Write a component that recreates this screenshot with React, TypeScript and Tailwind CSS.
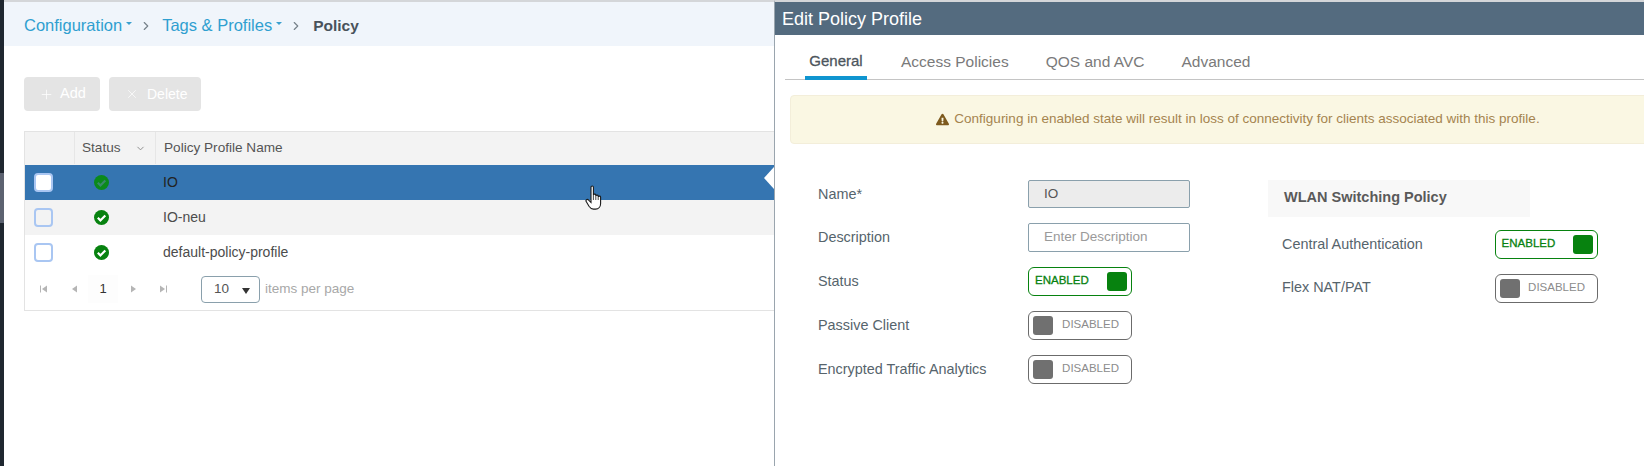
import { ChevronDown, ChevronRight, Plus, X } from "lucide-react";
import { FaExclamationTriangle } from "react-icons/fa";

const font = "font-['Liberation_Sans',Arial,sans-serif]";

const StatusIcon = ({ selected }: { selected?: boolean }) => (
  <svg width="15" height="15" viewBox="0 0 15 15">
    <circle cx="7.5" cy="7.5" r="7.5" fill={selected ? "#0b8a1c" : "#07820f"} />
    <path d="M3.8 7.8l2.6 2.6 4.9-5" fill="none" stroke={selected ? "#3a8a6a" : "#fff"} strokeWidth="2.2" />
  </svg>
);

const Row = ({ name, selected, striped }: { name: string; selected?: boolean; striped?: boolean }) => (
  <div className={`flex items-center h-[35px] ${selected ? "bg-[#3575b1]" : striped ? "bg-[#f3f3f3]" : "bg-white"}`}>
    <div className="w-[50px] pl-[9px]">
      <div className={`w-[19px] h-[19px] rounded-[4px] border-2 border-[#a9c6f2] ${selected ? "bg-white" : ""}`} />
    </div>
    <div className="w-[80px] flex justify-center pr-[28px]">
      <StatusIcon selected={selected} />
    </div>
    <span className={`pl-[8px] text-[14px] ${selected ? "text-[#222]" : "text-[#4c4c4c]"}`}>{name}</span>
  </div>
);

const PagerIcon = ({ dir, end }: { dir: "l" | "r"; end?: boolean }) => (
  <svg width="8" height="8" viewBox="0 0 8 8" fill="#b5b5b5">
    {dir === "l" ? <path d="M7 0.5v7L2 4z" /> : <path d="M1 0.5v7L6 4z" />}
    {end && (dir === "l" ? <rect x="0" y="0.5" width="1" height="7" /> : <rect x="7" y="0.5" width="1" height="7" />)}
  </svg>
);

const Toggle = ({ on }: { on?: boolean }) =>
  on ? (
    <div className="flex items-center justify-between w-[104px] h-[29px] rounded-[6px] border border-[#07820f] pl-[6px] pr-[4px]">
      <span className="text-[11.5px] text-[#07820f] [-webkit-text-stroke:0.3px_#07820f]">ENABLED</span>
      <div className="w-[20px] h-[19px] rounded-[3px] bg-[#07820f]" />
    </div>
  ) : (
    <div className="flex items-center justify-between w-[104px] h-[29px] rounded-[6px] border border-[#6b6b6b] pl-[4px] pr-[12px]">
      <div className="w-[20px] h-[19px] rounded-[3px] bg-[#707070]" />
      <span className="text-[11.5px] text-[#8c8c8c]">DISABLED</span>
    </div>
  );

const FormRow = ({ label, className, children }: { label: string; className?: string; children: React.ReactNode }) => (
  <div className={`flex items-center h-[44px] ${className ?? ""}`}>
    <span className="w-[210px] pt-[2px] text-[14.4px] text-[#56646c]">{label}</span>
    {children}
  </div>
);

const Caret = () => <span className="ml-[4px] mb-[4px] inline-block border-x-[3px] border-t-[3px] border-x-transparent border-t-[#3aa0cf]" />;

export default function App() {
  return (
    <div className={`relative flex w-[1644px] h-[466px] overflow-hidden bg-white ${font}`}>
      <div className="w-[4px] flex flex-col shrink-0">
        <div className="h-[173px] bg-[#1f2730]" />
        <div className="h-[50px] bg-[#5c6270]" />
        <div className="flex-1 bg-[#1f2730]" />
      </div>

      {/* left list */}
      <div className="w-[770px] shrink-0 border-t-2 border-[#d4d6d9]">
        <div className="flex items-center h-[44px] pl-[20px] pt-[3px] bg-[#f0f5fb] text-[16.5px]">
          <span className="text-[#2f9fd0]">Configuration</span>
          <Caret />
          <ChevronRight size={14} className="ml-[7px] mr-[9px] text-[#77828a]" />
          <span className="text-[#2f9fd0]">Tags &amp; Profiles</span>
          <Caret />
          <ChevronRight size={14} className="ml-[7px] mr-[10px] text-[#77828a]" />
          <span className="font-bold text-[15.5px] text-[#49525a]">Policy</span>
        </div>

        <div className="flex gap-[9px] pl-[20px] mt-[31px]">
          <div className="flex items-center w-[76px] h-[34px] pl-[15px] gap-[6px] rounded-[4px] bg-[#e4e4e4] text-[14.5px] text-white">
            <Plus size={15} strokeWidth={1.2} />
            Add
          </div>
          <div className="flex items-center w-[92px] h-[34px] pl-[16px] gap-[8px] rounded-[4px] bg-[#e4e4e4] text-[14px] text-white">
            <X size={14} strokeWidth={1.2} />
            Delete
          </div>
        </div>

        <div className="ml-[20px] mt-[20px] border-l border-t border-b border-[#e3e3e3] h-[180px]">
          <div className="flex items-center h-[33px] pb-px bg-[#f3f3f3] text-[13.6px] text-[#555]">
            <div className="w-[50px] h-full border-r border-[#e6e6e6]" />
            <div className="flex items-center justify-between w-[81px] h-full pl-[7px] pr-[9px] border-r border-[#e6e6e6]">
              Status
              <ChevronDown size={11} className="text-[#888]" />
            </div>
            <span className="pl-[8px]">Policy Profile Name</span>
          </div>
          <Row name="IO" selected />
          <Row name="IO-neu" striped />
          <Row name="default-policy-profile" />
          <div className="flex items-center h-[40px] pb-[2px]">
            <div className="flex items-center pl-[15px] w-[176px]">
              <PagerIcon dir="l" end />
              <span className="ml-[22px]"><PagerIcon dir="l" /></span>
              <span className="w-[30px] ml-[10px] h-[28px] flex items-center justify-center text-[13px] text-[#333] bg-[#fdfdfd]">1</span>
              <span className="ml-[12px]"><PagerIcon dir="r" /></span>
              <span className="ml-[21px]"><PagerIcon dir="r" end /></span>
            </div>
            <div className="flex items-center justify-between w-[59px] h-[27px] pl-[12px] pr-[9px] rounded-[4px] border border-[#8aa0ac] text-[13.5px] text-[#555]">
              10
              <span className="inline-block mt-[3px] border-x-[4px] border-t-[6px] border-x-transparent border-t-[#333]" />
            </div>
            <span className="ml-[5px] text-[13.5px] text-[#a8a8a8]">items per page</span>
          </div>
        </div>
      </div>

      {/* edit panel */}
      <div className="flex-1 min-w-0 border-l border-[#9aa5ae] border-t-2 border-t-[#d4d6d9]">
        <div className="flex items-center h-[33px] pl-[7px] pt-px bg-[#546b7f] text-[18px] text-white">Edit Policy Profile</div>
        <div className="flex ml-[10px] h-[45px] pt-[9px] border-b border-[#c4c4c4] text-[15.5px] text-[#7a7a7a]">
          <div className="relative flex items-center justify-center w-[62px] ml-[20px] mr-[34px] text-[15px] text-[#4c555c] [-webkit-text-stroke:0.3px_#4c555c]">
            General
            <div className="absolute -bottom-px left-0 right-0 h-[4px] bg-[#0f95d0]" />
          </div>
          <span className="flex items-center mr-[37px]">Access Policies</span>
          <span className="flex items-center mr-[37px]">QOS and AVC</span>
          <span className="flex items-center">Advanced</span>
        </div>
        <div className="flex items-center justify-center gap-[5px] w-[896px] h-[49px] ml-[15px] mt-[15px] rounded-[4px] bg-[#faf7e3] border border-[#f3eeda] text-[13.5px] text-[#a5844f]">
          <FaExclamationTriangle size={13} className="text-[#7d5a1e]" />
          Configuring in enabled state will result in loss of connectivity for clients associated with this profile.
        </div>

        <div className="flex mt-[28px] ml-[43px]">
          <div className="w-[450px]">
            <FormRow label="Name*">
              <div className="flex items-center w-[162px] h-[28px] pl-[15px] rounded-[2px] border border-[#8aa0ac] bg-[#ececec] text-[13.5px] text-[#555]">IO</div>
            </FormRow>
            <FormRow label="Description" className="-mt-px">
              <div className="flex items-center w-[162px] h-[29px] pl-[15px] rounded-[2px] border border-[#8aa0ac] text-[13.5px] text-[#9a9a9a]">Enter Description</div>
            </FormRow>
            <FormRow label="Status"><Toggle on /></FormRow>
            <FormRow label="Passive Client"><Toggle /></FormRow>
            <FormRow label="Encrypted Traffic Analytics"><Toggle /></FormRow>
          </div>
          <div className="w-[330px] pt-[8px]">
            <div className="flex items-center w-[262px] h-[37px] pl-[16px] pb-px bg-[#f8f8f8] text-[14.5px] font-bold text-[#5a5a5a]">WLAN Switching Policy</div>
            <div className="flex items-center h-[44px] mt-[5px] pl-[14px]">
              <span className="w-[214px] pt-[2px] text-[14.4px] text-[#56646c]">Central Authentication</span>
              <Toggle on />
            </div>
            <div className="flex items-center h-[44px] pl-[14px]">
              <span className="w-[214px] text-[14.4px] text-[#56646c]">Flex NAT/PAT</span>
              <Toggle />
            </div>
          </div>
        </div>
      </div>

      {/* selected row pointer */}
      <div className="absolute left-[764px] top-[167px] w-0 h-0 border-y-[11px] border-r-[10px] border-y-transparent border-r-white" />

      {/* mouse cursor */}
      <svg className="absolute left-[585px] top-[185px]" width="19" height="26" viewBox="0 0 19 26">
        <path
          d="M6 2.2c0-1.6 2.4-1.6 2.4 0V10c0-1.2 2.4-1.2 2.4 0v1c0-1.2 2.4-1.2 2.4 0v1c0-1.2 2.4-1.2 2.4 0v6.5c0 3-2 5.6-5 5.6H8.4c-2 0-3.2-1-4.4-2.8L1.2 16.5c-.9-1.5 1-2.8 2.2-1.6L6 17.4z"
          fill="#fff"
          stroke="#1a1a1a"
          strokeWidth="1.1"
        />
        <path d="M8.4 10v5M10.8 11v4M13.2 12v3" stroke="#1a1a1a" strokeWidth="0.8" />
      </svg>
    </div>
  );
}
